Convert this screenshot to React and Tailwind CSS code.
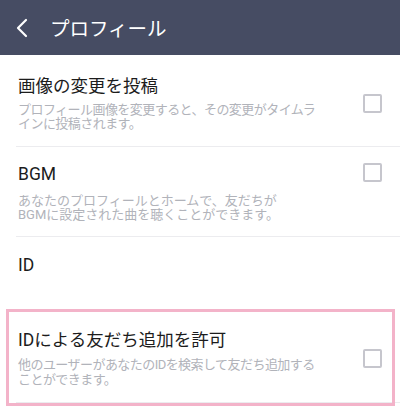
import React from "react";

const cjk = { fontFamily: '"Noto Sans CJK JP", sans-serif' };
const latin = { fontFamily: '"Roboto", "Noto Sans CJK JP", sans-serif' };

const L = ({ children }) => <span style={latin}>{children}</span>;

function Checkbox() {
  return <div className="w-[19px] h-[19px] border-2 border-[#c6c6cd] rounded-[2px] shrink-0" />;
}

function Row({ title, lines, pt, pb, gap, tight = false, align = "items-center" }) {
  return (
    <div className="ml-[16px] border-b border-[#ececef]">
      <div className={`flex ${align} justify-between pl-[2px] pr-[18px]`} style={{ paddingTop: pt, paddingBottom: pb }}>
        <div className="min-w-0">
          <div className="text-[17.5px] leading-[24px] text-[#1c1c1c] whitespace-nowrap">{title}</div>
          <div
            className={`text-[13px] leading-[14px] text-[#b1b3ba] ${tight ? "tracking-[-0.55px]" : ""}`}
            style={{ marginTop: gap }}
          >
            {lines.map((l, i) => (
              <div key={i} className="whitespace-nowrap">{l}</div>
            ))}
          </div>
        </div>
        <div className={align === "items-start" ? "pt-[2px]" : "pt-[4px]"}>
          <Checkbox />
        </div>
      </div>
    </div>
  );
}

export default function App() {
  return (
    <div className="w-[400px] h-[410px] bg-white relative overflow-hidden" style={cjk}>
      <div className="h-[55px] bg-[#464c63] flex items-center">
        <svg width="14" height="20" viewBox="0 0 14 20" className="ml-[15px]">
          <path d="M11 2 L3 10 L11 18" fill="none" stroke="#fff" strokeWidth="2.2" strokeLinecap="round" strokeLinejoin="round" />
        </svg>
        <span className="ml-[21px] text-[19.5px] text-white leading-none">プロフィール</span>
      </div>

      <Row
        title="画像の変更を投稿"
        lines={["プロフィール画像を変更すると、その変更がタイムラ", "インに投稿されます。"]}
        pt={18}
        pb={16}
        gap={5}
        tight
      />
      <Row
        title={<L>BGM</L>}
        lines={["あなたのプロフィールとホームで、友だちが", <><L>BGM</L>に設定された曲を聴くことができます。</>]}
        pt={14}
        pb={14}
        gap={7}
        align="items-start"
      />
      <div className="h-[72px] pl-[18px] pt-[15px]">
        <div className="text-[17.5px] leading-[24px] text-[#1c1c1c]"><L>ID</L></div>
      </div>
      <Row
        title={<><L>ID</L>による友だち追加を許可</>}
        lines={[<>他のユーザーがあなたの<L>ID</L>を検索して友だち追加する</>, "ことができます。"]}
        pt={18}
        pb={16}
        gap={5}
        tight
      />

      <div className="absolute left-[6px] top-[309px] w-[389px] h-[97px] border-[3px] border-[#f3b3c9] pointer-events-none" />
    </div>
  );
}
